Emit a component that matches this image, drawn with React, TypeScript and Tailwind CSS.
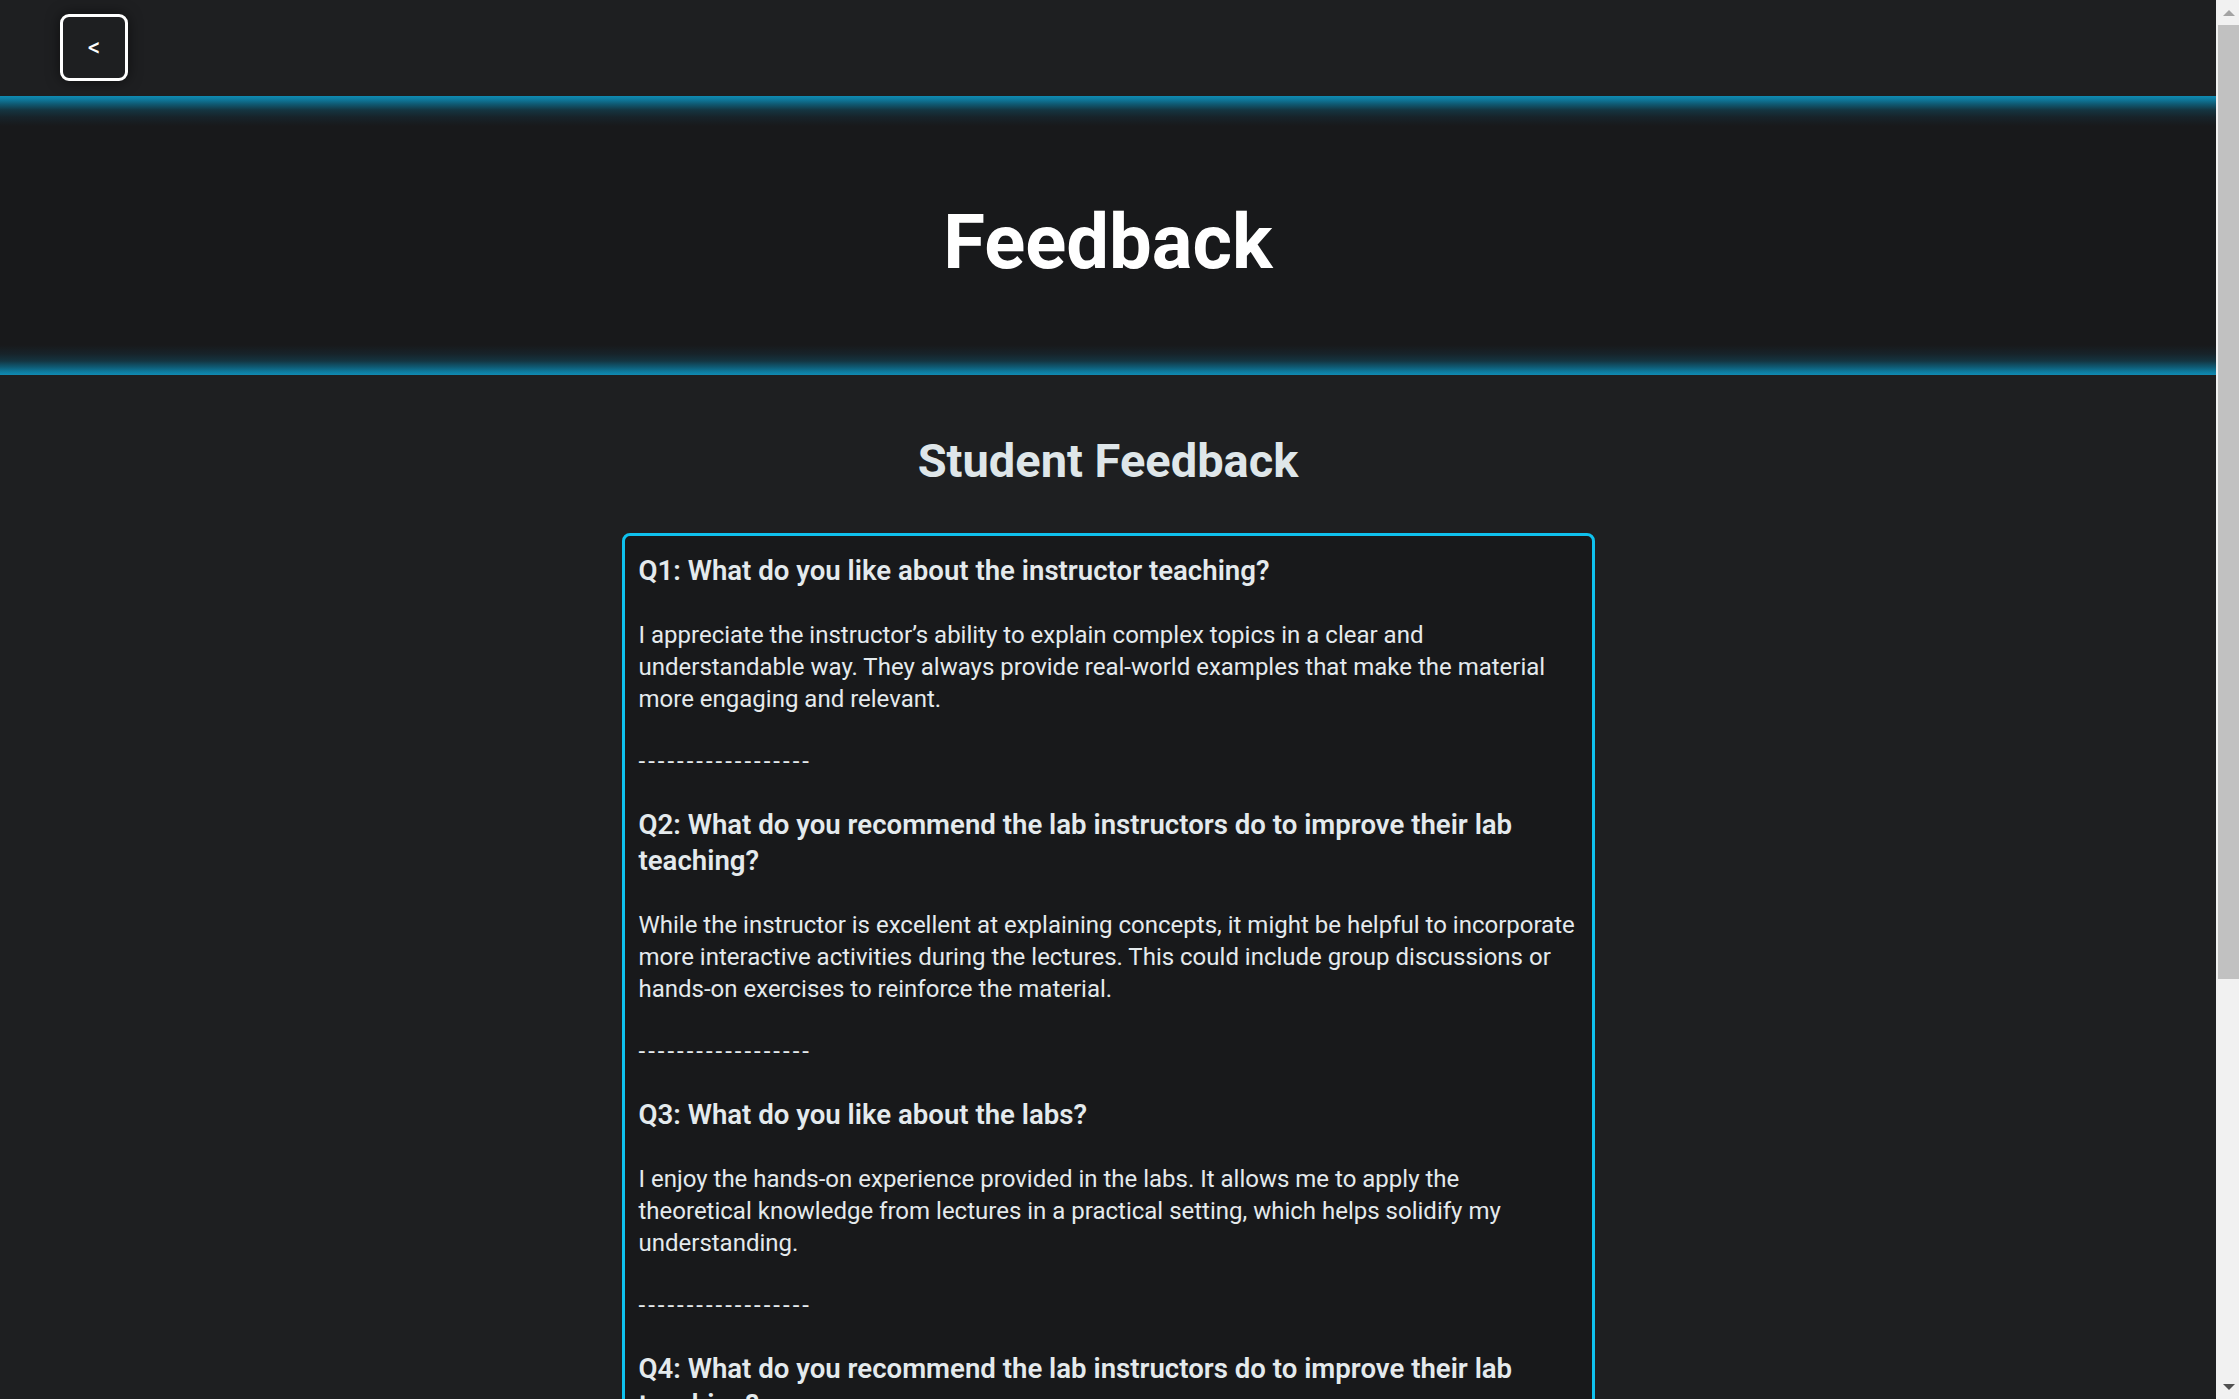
import React from "react";

const FONT = { fontFamily: "Roboto, 'Noto Sans', Arial, sans-serif" };

type QA = { q: string[]; a: string[] };

const items: QA[] = [
  {
    q: ["Q1: What do you like about the instructor teaching?"],
    a: [
      "I appreciate the instructor’s ability to explain complex topics in a clear and",
      "understandable way. They always provide real-world examples that make the material",
      "more engaging and relevant.",
    ],
  },
  {
    q: ["Q2: What do you recommend the lab instructors do to improve their lab", "teaching?"],
    a: [
      "While the instructor is excellent at explaining concepts, it might be helpful to incorporate",
      "more interactive activities during the lectures. This could include group discussions or",
      "hands-on exercises to reinforce the material.",
    ],
  },
  {
    q: ["Q3: What do you like about the labs?"],
    a: [
      "I enjoy the hands-on experience provided in the labs. It allows me to apply the",
      "theoretical knowledge from lectures in a practical setting, which helps solidify my",
      "understanding.",
    ],
  },
  {
    q: ["Q4: What do you recommend the lab instructors do to improve their lab", "teaching?"],
    a: [
      "It would be great if the lab instructors could spend more time walking around",
      "and checking in with each group, offering guidance before problems grow.",
    ],
  },
];

function Scrollbar() {
  return (
    <div className="w-[23px] h-full bg-[#f1f1f1] flex flex-col items-end shrink-0">
      <div className="w-full h-[25px] flex items-center justify-center pl-[2px]">
        <div className="w-0 h-0 border-l-[6px] border-r-[6px] border-b-[6px] border-l-transparent border-r-transparent border-b-[#a3a3a3]" />
      </div>
      <div className="w-[21px] h-[954px] bg-[#c1c1c1]" />
      <div className="flex-1" />
      <div className="w-full h-[25px] flex items-center justify-center pl-[2px]">
        <div className="w-0 h-0 border-l-[6px] border-r-[6px] border-t-[6px] border-l-transparent border-r-transparent border-t-[#505050]" />
      </div>
    </div>
  );
}

export default function App() {
  return (
    <div className="w-full h-[1399px] overflow-hidden flex bg-[#1e1f21]" style={FONT}>
      <div className="flex-1 h-full overflow-hidden flex flex-col">
        {/* top bar */}
        <div className="h-[96px] shrink-0 pl-[60px] pt-[14px]">
          <button className="w-[68px] h-[67px] border-[3px] border-white rounded-[9px] bg-[#1e1f21] text-white text-[25px] leading-none flex items-center justify-center shadow-[0_0_14px_rgba(0,0,0,0.55)]">
            &lt;
          </button>
        </div>

        {/* header band */}
        <div className="h-[279px] shrink-0 bg-[linear-gradient(to_bottom,#108bb3_0px,#0e7ca0_3px,#0f5a73_8px,#143541_14px,#17232a_21px,#18191b_30px,#18191b_calc(100%_-_30px),#17232a_calc(100%_-_21px),#143541_calc(100%_-_14px),#0f5a73_calc(100%_-_8px),#0e7ca0_calc(100%_-_3px),#108bb3_100%)] pt-[109px] text-center">
          <h1 className="text-[76px] leading-[75px] font-bold text-white">Feedback</h1>
        </div>

        {/* content */}
        <div className="flex flex-col items-center pt-[62px]">
          <h2 className="text-[47px] leading-[47px] font-bold text-[#dfe6e9]">Student Feedback</h2>
          <div className="mt-[49px] w-[973px] border-[3px] border-[#0fc1ee] rounded-[8px] bg-[#18191b] px-[14px] pt-[17px] pb-[20px] flex flex-col gap-[30px] text-[#e4eaed]">
            {items.map((it, i) => (
              <React.Fragment key={i}>
                <div className="text-[27.6px] leading-[36px] font-semibold">
                  {it.q.map((l, j) => (
                    <span key={j} className="block whitespace-nowrap">
                      {l}
                    </span>
                  ))}
                </div>
                <div className="text-[24px] leading-[32px]">
                  {it.a.map((l, j) => (
                    <span key={j} className="block whitespace-nowrap">
                      {l}
                    </span>
                  ))}
                </div>
                <div className="text-[24px] leading-[32px] tracking-[3px]">------------------</div>
              </React.Fragment>
            ))}
          </div>
        </div>
      </div>
      <Scrollbar />
    </div>
  );
}
